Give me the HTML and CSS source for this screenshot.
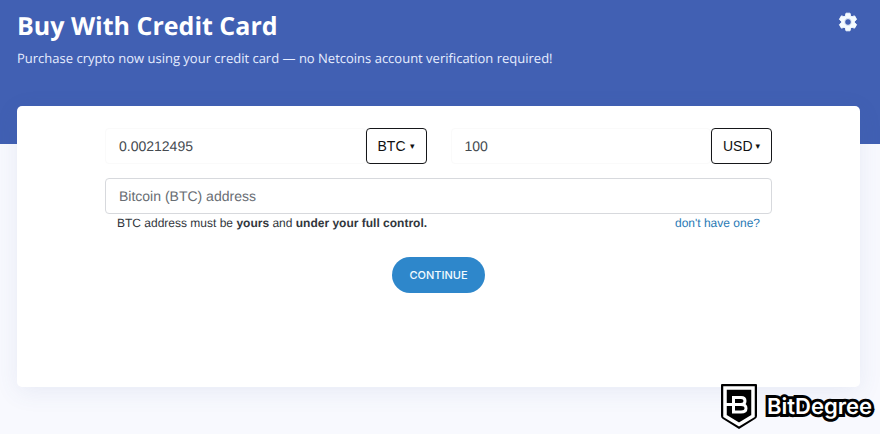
FILE: index.html
```html
<!DOCTYPE html>
<html lang="en">
<head>
<meta charset="utf-8">
<meta name="viewport" content="width=device-width, initial-scale=1">
<title>Buy With Credit Card</title>
<link rel="stylesheet" href="styles.css">
</head>
<body>
<header class="hero">
  <div>
    <h1 class="title">Buy With Credit Card</h1>
    <p class="subtitle">Purchase crypto now using your credit card — no Netcoins account verification required!</p>
  </div>
  <button class="settings" type="button" aria-label="Settings">
    <svg viewBox="0 0 24 24" width="22" height="22" aria-hidden="true"><path fill="currentColor" d="M19.14 12.94c.04-.3.06-.61.06-.94 0-.32-.02-.64-.07-.94l2.03-1.58a.49.49 0 0 0 .12-.61l-1.92-3.32a.488.488 0 0 0-.59-.22l-2.39.96c-.5-.38-1.03-.7-1.62-.94l-.36-2.54a.484.484 0 0 0-.48-.41h-3.84c-.24 0-.43.17-.47.41l-.36 2.54c-.59.24-1.13.57-1.62.94l-2.39-.96c-.22-.08-.47 0-.59.22L2.74 8.87c-.12.21-.08.47.12.61l2.03 1.58c-.05.3-.09.63-.09.94s.02.64.07.94l-2.03 1.58a.49.49 0 0 0-.12.61l1.92 3.32c.12.22.37.29.59.22l2.39-.96c.5.38 1.03.7 1.62.94l.36 2.54c.05.24.24.41.48.41h3.84c.24 0 .44-.17.47-.41l.36-2.54c.59-.24 1.13-.56 1.62-.94l2.39.96c.22.08.47 0 .59-.22l1.92-3.32c.12-.22.07-.47-.12-.61l-2.01-1.58zM12 15.700a3.700 3.700 0 1 1 0-7.400 3.700 3.700 0 0 1 0 7.400z" stroke="currentColor" stroke-width="1" stroke-linejoin="round"/></svg>
  </button>
</header>
<main class="card">
  <form class="form">
    <div class="amounts">
      <div class="amount">
        <input class="field quiet" type="text" value="0.00212495" aria-label="Crypto amount">
        <div class="picker">
          <select class="currency" aria-label="Cryptocurrency"><option>BTC</option></select>
          <span class="caret" aria-hidden="true">▾</span>
        </div>
      </div>
      <div class="amount">
        <input class="field quiet" type="text" value="100" aria-label="Cash amount">
        <div class="picker">
          <select class="currency" aria-label="Currency"><option>USD</option></select>
          <span class="caret" aria-hidden="true">▾</span>
        </div>
      </div>
    </div>
    <input class="field address" type="text" placeholder="Bitcoin (BTC) address" aria-label="Bitcoin (BTC) address">
    <div class="hint">
      <span>BTC address must be <b>yours</b> and <b>under your full control.</b></span>
      <a class="link" href="#">don't have one?</a>
    </div>
    <button class="continue" type="button">CONTINUE</button>
  </form>
</main>
<div class="brand">
  <svg viewBox="0 0 36 45" width="36" height="45" aria-hidden="true">
    <path d="M1 0h34q1 0 1 1v31q0 2-2 3L18 45 2 35q-2-1-2-3V1q0-1 1-1z" fill="#000"/>
    <path d="M4 4h28v28L18 40.500 4 32z" fill="#000" stroke="#fff" stroke-width="3.500"/>
    <path d="M11 13.500h9q4 0 4 3.500t-4 3.500q5 0 5 3.750t-5 3.750h-7.500V14M5 20.500h15" fill="none" stroke="#fff" stroke-width="3"/>
  </svg>
  <span class="brand-name">BitDegree</span>
</div>
</body>
</html>
```
FILE: styles.css
```css
* {
  box-sizing: border-box;
}

body {
  position: relative;
  min-height: 100vh;
  margin: 0;
  background: #f8f9fe;
  color: #32373d;
  font-family: "Liberation Sans", sans-serif;
  text-rendering: geometricPrecision;
}

.hero {
  display: flex;
  justify-content: space-between;
  align-items: flex-start;
  height: 144px;
  padding: 8px 21px 0 17px;
  background: #4160b3;
  color: #fff;
  font-family: "Open Sans", sans-serif;
}

.title {
  margin: 0;
  font-size: 25px;
  line-height: 36px;
  font-weight: 700;
}

.subtitle {
  margin: 4px 0 0;
  color: #e6edff;
  font-size: 13px;
  line-height: 20px;
}

.settings {
  display: flex;
  margin: 3px 0 0;
  padding: 0;
  border: 0;
  background: none;
  color: #f4fbff;
}

.card {
  min-height: 281px;
  margin: -38px 20px 0 17px;
  padding: 22px 88px;
  border-radius: 5px;
  background: #fff;
  box-shadow: 0 5px 24px rgba(70, 90, 150, 0.09);
}

.form {
  display: flex;
  flex-direction: column;
}

.amounts {
  display: grid;
  grid-template-columns: 1fr 1fr;
  gap: 24px;
}

.amount {
  display: flex;
}

.field {
  width: 100%;
  min-width: 0;
  height: 36px;
  padding: 0 13px;
  border: 1px solid #d7d9dd;
  border-radius: 4px;
  background: #fff;
  color: #454a50;
  font: 14px/20px "Liberation Sans", sans-serif;
  text-rendering: geometricPrecision;
}

.quiet {
  flex: 1;
  border-color: #fafafa;
}

.field::placeholder {
  color: #686d73;
  opacity: 1;
}

.picker {
  position: relative;
}

.currency {
  width: 61px;
  height: 36px;
  padding: 0 11px;
  border: 1px solid #16171a;
  border-radius: 4px;
  background: #fff;
  color: #111;
  font: 14px/20px "Liberation Sans", sans-serif;
  appearance: none;
}

.caret {
  position: absolute;
  top: 12px;
  right: 12px;
  color: #111;
  font: 9px/14px "DejaVu Sans", sans-serif;
  pointer-events: none;
}

.address {
  margin-top: 14px;
}

.hint {
  display: flex;
  justify-content: space-between;
  padding: 0 12px;
  font-size: 12px;
  line-height: 18px;
}

.link {
  color: #2a7ab5;
  text-decoration: none;
}

.continue {
  align-self: center;
  height: 36px;
  margin-top: 25px;
  padding: 0 17px;
  border: 0;
  border-radius: 18px;
  background: #2e87cb;
  color: #f2fbff;
  font: 500 11px/16px Inter, "Liberation Sans", sans-serif;
}

.brand {
  position: absolute;
  right: 8px;
  bottom: 5px;
  display: flex;
  align-items: center;
  gap: 10px;
}

.brand-name {
  color: #fff;
  font: 600 22px/36px Inter, "Liberation Sans", sans-serif;
  -webkit-text-stroke: 6px #000;
  paint-order: stroke fill;
  stroke-linejoin: round;
}
```
